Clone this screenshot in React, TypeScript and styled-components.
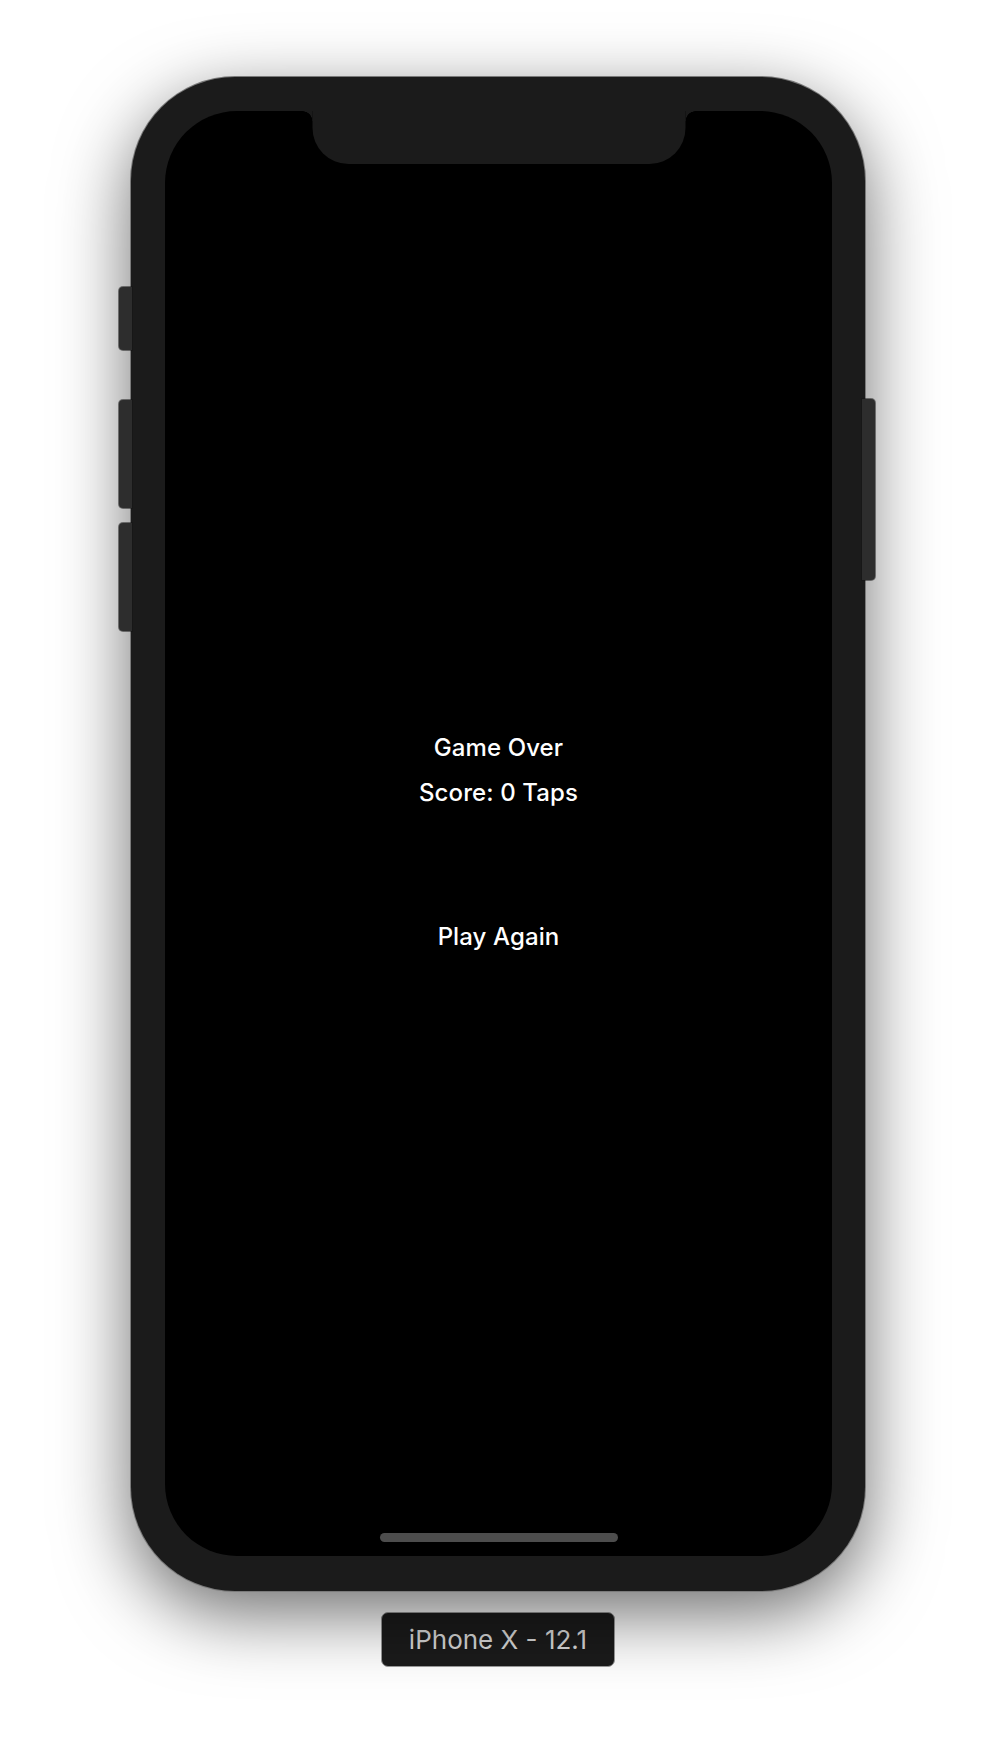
import React from "react";
import styled, { createGlobalStyle } from "styled-components";

const GlobalStyle = createGlobalStyle`
  html, body {
    margin: 0;
    padding: 0;
    background: #ffffff;
  }
  body {
    font-family: Inter, "Noto Sans", "Liberation Sans", sans-serif;
  }
`;

const Page = styled.div`
  width: 996px;
  min-height: 1740px;
  display: flex;
  flex-direction: column;
  align-items: center;
  padding-top: 77px;
  box-sizing: border-box;
  background: #ffffff;
`;

const Phone = styled.div`
  position: relative;
  z-index: 0;
  width: 734px;
  height: 1514px;
  box-sizing: border-box;
  padding: 34px 33px 35px 34px;
  border-radius: 104px;
  background: #1b1b1b;
  box-shadow: 0 0 0 1px #7a7a7a, 0 22px 72px rgba(0, 0, 0, 0.58);
  display: flex;
`;

const SideButton = styled.div<{ $side: "left" | "right"; $top: number; $height: number }>`
  position: absolute;
  top: ${(p) => p.$top}px;
  height: ${(p) => p.$height}px;
  width: 13px;
  ${(p) => (p.$side === "left" ? "left: -12px;" : "right: -10px;")}
  background: #2d2d2d;
  border-radius: ${(p) => (p.$side === "left" ? "4px 0 0 4px" : "0 4px 4px 0")};
  z-index: -1;
  box-shadow: 0 0 0 1px rgba(20, 20, 20, 0.5);
`;

const Screen = styled.div`
  position: relative;
  flex: 1;
  background: #000000;
  border-radius: 72px;
  display: flex;
  flex-direction: column;
  align-items: center;
  overflow: hidden;
`;

const Notch = styled.div`
  position: absolute;
  top: 0;
  left: 50%;
  transform: translateX(-50%);
  width: 373px;
  height: 53px;
  background: #1b1b1b;
  border-radius: 0 0 36px 36px;

  &::before,
  &::after {
    content: "";
    position: absolute;
    top: 0;
    width: 10px;
    height: 10px;
  }
  &::before {
    left: -10px;
    background: radial-gradient(circle at 0 100%, transparent 9.5px, #1b1b1b 10px);
  }
  &::after {
    right: -10px;
    background: radial-gradient(circle at 100% 100%, transparent 9.5px, #1b1b1b 10px);
  }
`;

const Content = styled.div`
  flex: 1;
  display: flex;
  flex-direction: column;
  align-items: center;
  justify-content: center;
  padding-top: 40px;
  color: #ffffff;
`;

const Label = styled.div<{ $gap?: number }>`
  font-size: 24px;
  font-weight: 500;
  line-height: 29px;
  letter-spacing: 0.1px;
  margin-top: ${(p) => p.$gap ?? 0}px;
`;

const HomeIndicator = styled.div`
  width: 238px;
  height: 9px;
  border-radius: 5px;
  background: #4d4d4d;
  margin-bottom: 14px;
`;

const DeviceTag = styled.div`
  margin-top: 21px;
  width: 234px;
  height: 55px;
  box-sizing: border-box;
  display: flex;
  align-items: center;
  justify-content: center;
  background: #1b1b1b;
  border: 1px solid #9c9c9c;
  border-radius: 7px;
  color: #d9d9d9;
  font-size: 26px;
  font-weight: 400;
`;

export default function App() {
  return (
    <>
      <GlobalStyle />
      <Page>
        <Phone>
          <SideButton $side="left" $top={210} $height={63} />
          <SideButton $side="left" $top={323} $height={108} />
          <SideButton $side="left" $top={446} $height={108} />
          <SideButton $side="right" $top={322} $height={181} />
          <Screen>
            <Notch />
            <Content>
              <Label>Game Over</Label>
              <Label $gap={16}>Score: 0 Taps</Label>
              <Label $gap={115}>Play Again</Label>
            </Content>
            <HomeIndicator />
          </Screen>
        </Phone>
        <DeviceTag>iPhone X - 12.1</DeviceTag>
      </Page>
    </>
  );
}
